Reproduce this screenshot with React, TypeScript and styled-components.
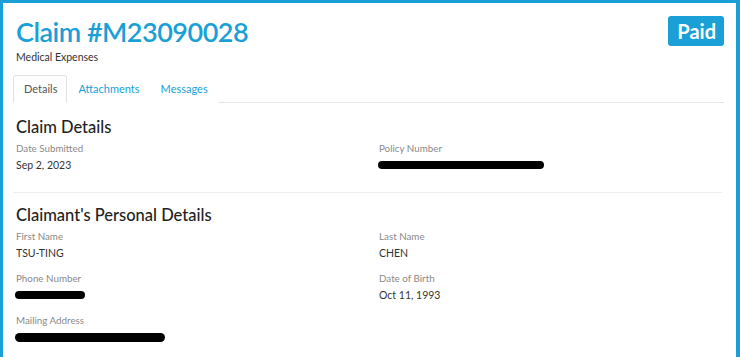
import React from "react";
import styled, { createGlobalStyle } from "styled-components";

const Global = createGlobalStyle`
  html, body { margin: 0; padding: 0; background: #ffffff; }
  body { font-family: "Lato", "Noto Sans CJK TC", sans-serif; color: #333; }
  * { box-sizing: border-box; }
`;

const BLUE = "#1a9fd6";

const Frame = styled.div`
  width: 740px;
  height: 357px;
  overflow: hidden;
  border-top: 3px solid ${BLUE};
  border-left: 3px solid ${BLUE};
  border-right: 4px solid ${BLUE};
  padding: 12px 12px 0 10px;
  background: #fff;
`;

const Header = styled.header`
  display: flex;
  justify-content: space-between;
  align-items: flex-start;
  padding-left: 3px;
`;

const TitleBlock = styled.div`
  display: flex;
  flex-direction: column;
`;

const Title = styled.h1`
  margin: 0;
  font-size: 27px;
  line-height: 34px;
  letter-spacing: -0.5px;
  font-weight: 600;
  color: ${BLUE};
`;

const Subtitle = styled.div`
  margin-top: 1px;
  font-size: 10.5px;
  line-height: 14px;
  color: #333;
`;

const Badge = styled.span`
  margin-top: 1px;
  background: ${BLUE};
  color: #fff;
  font-weight: 700;
  font-size: 20px;
  line-height: 30px;
  padding: 0 8px 0 9px;
  border-radius: 3px;
`;

const TabBar = styled.nav`
  display: flex;
  margin-top: 11px;
  border-bottom: 1px solid #e6e6e6;
`;

const Tab = styled.div<{ $active?: boolean }>`
  font-size: 11px;
  line-height: 14px;
  padding: 6px 9px 6px 10px;
  margin-bottom: -1px;
  border: 1px solid ${(p) => (p.$active ? "#e3e3e3" : "transparent")};
  border-bottom-color: ${(p) => (p.$active ? "#fff" : "transparent")};
  border-radius: 3px 3px 0 0;
  background: #fff;
  color: ${(p) => (p.$active ? "#555" : BLUE)};
`;

const Section = styled.section<{ $divided?: boolean; $top: number }>`
  padding: ${(p) => p.$top}px 0 0 3px;
  margin-right: 2px;
  ${(p) => (p.$divided ? "border-bottom: 1px solid #eeeeee; padding-bottom: 20px;" : "")}
`;

const SectionTitle = styled.h2`
  margin: 0 0 4px;
  font-size: 16.5px;
  line-height: 22px;
  font-weight: 500;
  color: #222;
`;

const Grid = styled.div`
  display: grid;
  grid-template-columns: 1fr 1fr;
  column-gap: 20px;
  row-gap: 12px;
`;

const Field = styled.div`
  display: flex;
  flex-direction: column;
  gap: 3px;
`;

const Label = styled.span`
  font-size: 9.8px;
  line-height: 13px;
  color: #8a8a8a;
`;

const Value = styled.span`
  font-size: 10.5px;
  line-height: 14px;
  color: #333;
  height: 14px;
  display: flex;
  align-items: center;
`;

const Redaction = styled.span<{ $w: number; $h?: number }>`
  display: block;
  width: ${(p) => p.$w}px;
  height: ${(p) => p.$h ?? 8}px;
  background: #000;
  border-radius: 5px;
  margin-left: -1px;
`;

export default function App() {
  return (
    <>
      <Global />
      <Frame>
        <Header>
          <TitleBlock>
            <Title>Claim #M23090028</Title>
            <Subtitle>Medical Expenses</Subtitle>
          </TitleBlock>
          <Badge>Paid</Badge>
        </Header>
        <TabBar>
          <Tab $active>Details</Tab>
          <Tab>Attachments</Tab>
          <Tab>Messages</Tab>
        </TabBar>
        <Section $divided $top={13}>
          <SectionTitle>Claim Details</SectionTitle>
          <Grid>
            <Field>
              <Label>Date Submitted</Label>
              <Value>Sep 2, 2023</Value>
            </Field>
            <Field>
              <Label>Policy Number</Label>
              <Value>
                <Redaction $w={166} />
              </Value>
            </Field>
          </Grid>
        </Section>
        <Section $top={11}>
          <SectionTitle>Claimant's Personal Details</SectionTitle>
          <Grid>
            <Field>
              <Label>First Name</Label>
              <Value>TSU-TING</Value>
            </Field>
            <Field>
              <Label>Last Name</Label>
              <Value>CHEN</Value>
            </Field>
            <Field>
              <Label>Phone Number</Label>
              <Value>
                <Redaction $w={70} />
              </Value>
            </Field>
            <Field>
              <Label>Date of Birth</Label>
              <Value>Oct 11, 1993</Value>
            </Field>
            <Field>
              <Label>Mailing Address</Label>
              <Value>
                <Redaction $w={150} $h={9} />
              </Value>
            </Field>
          </Grid>
        </Section>
      </Frame>
    </>
  );
}
